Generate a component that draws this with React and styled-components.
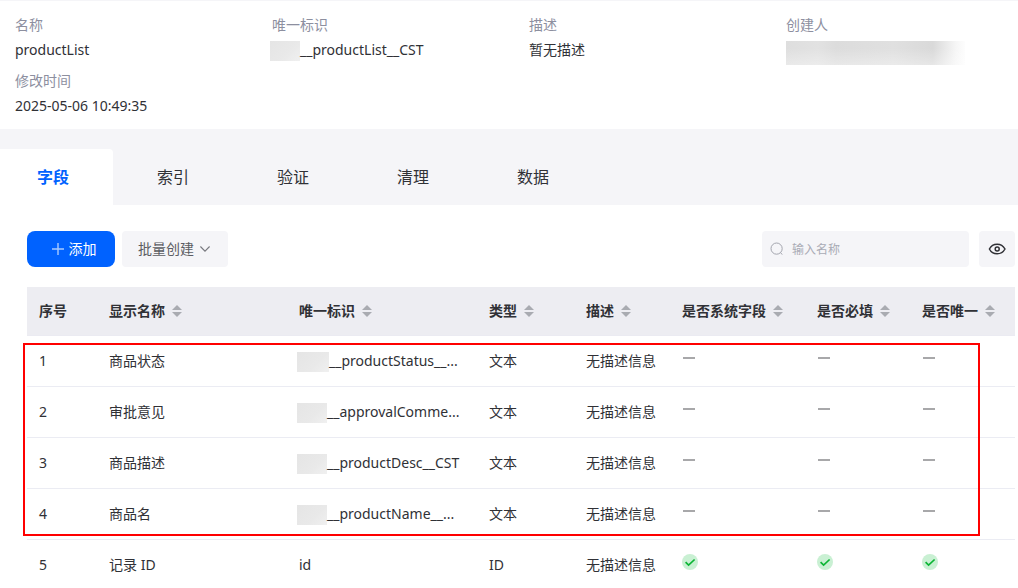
import React, { useState } from 'react';
import styled, { createGlobalStyle } from 'styled-components';

const GlobalStyle = createGlobalStyle`
  * {
    box-sizing: border-box;
  }

  body {
    margin: 0;
    background-color: #fff;
    color: #303136;
    font-family: 'Noto Sans', 'Noto Sans CJK SC', sans-serif;
    font-size: 14px;
    line-height: 20px;
  }

  button,
  input {
    border: 0;
    font: inherit;
    color: inherit;
  }

  button {
    cursor: pointer;
  }
`;

const InfoSection = styled.dl`
  display: grid;
  grid-template-columns: repeat(3, minmax(0, 257fr)) minmax(0, 232fr);
  row-gap: 11px;
  margin: 0;
  padding: 14px 0 13px 15px;
  border-top: 1px solid #f5f5f8;
`;

const InfoLabel = styled.dt`
  margin-bottom: 5px;
  color: #8d8f9f;
`;

const InfoValue = styled.dd`
  display: flex;
  align-items: center;
  height: 20px;
  margin: 0;
`;

const Mask = styled.span`
  flex: none;
  width: ${(props) => props.$width}px;
  height: 20px;
  margin: 2px 0 0 -2px;
  background: linear-gradient(135deg, #e5e5e5, #e9e9e9 60%, #f0f0f0);
`;

const CreatorMask = styled.span`
  width: 179px;
  height: 24px;
  margin-top: 6px;
  background:
    linear-gradient(180deg, rgba(255, 255, 255, 0) 30%, rgba(255, 255, 255, 0.35)),
    linear-gradient(90deg, #dedede, #e2e2e2 18%, #dcdcdc 28%, #e0e0e0 60%, #d9d9d9 82%, #f6f6f6 95%, #fdfdfd);
`;

const TabBar = styled.div`
  display: flex;
  padding-top: 20px;
  background-color: #f5f5f8;
`;

const Tab = styled.button`
  height: 56px;
  padding: 0 44px;
  border-radius: 0 4px 0 0;
  background-color: ${(props) => (props.$active ? '#fff' : 'transparent')};
  color: ${(props) => (props.$active ? '#0062ff' : '#303136')};
  font-size: 16px;
  font-weight: ${(props) => (props.$active ? 700 : 400)};

  &:first-child {
    padding-left: 37px;
  }
`;

const Panel = styled.main`
  padding: 26px 3px 0 27px;
`;

const Toolbar = styled.div`
  display: flex;
  align-items: center;
  margin-bottom: 20px;
`;

const AddButton = styled.button`
  display: flex;
  align-items: center;
  justify-content: center;
  gap: 5px;
  width: 88px;
  height: 36px;
  margin-right: 7px;
  padding: 0 0 0 6px;
  border-radius: 8px;
  background-color: #0062ff;
  color: #fff;
`;

const BatchButton = styled.button`
  display: flex;
  align-items: center;
  gap: 6px;
  height: 36px;
  padding: 0 18px 0 16px;
  border-radius: 4px;
  background-color: #f5f5f8;
  color: #5c5d63;
`;

const SearchBox = styled.label`
  display: flex;
  align-items: center;
  gap: 8px;
  width: 207px;
  height: 36px;
  margin-left: auto;
  padding: 0 8px;
  border-radius: 4px;
  background-color: #f5f5f8;
`;

const SearchInput = styled.input`
  flex: 1;
  min-width: 0;
  padding: 2px 0 0;
  outline: none;
  background: transparent;
  font-size: 12px;

  &::placeholder {
    color: #a9abb5;
    opacity: 1;
  }
`;

const EyeButton = styled.button`
  display: flex;
  align-items: center;
  justify-content: center;
  width: 36px;
  height: 36px;
  margin-left: 10px;
  padding: 0;
  border-radius: 4px;
  background-color: #f5f5f8;
`;

const TableWrapper = styled.div`
  position: relative;
`;

const Highlight = styled.div`
  position: absolute;
  top: 56px;
  right: 35px;
  left: -4px;
  height: 193px;
  border: 2px solid #ff0000;
  pointer-events: none;
`;

const Table = styled.table`
  width: 100%;
  table-layout: fixed;
  border-collapse: separate;
  border-spacing: 0;
`;

const HeadCell = styled.th`
  width: ${(props) => props.$width};
  height: 49px;
  padding: 0 0 0 12px;
  border-bottom: 1px solid #ebebf2;
  background-color: #ededf2;
  font-weight: 700;
  text-align: left;
`;

const HeadContent = styled.div`
  display: flex;
  align-items: center;
  gap: 7px;
  white-space: nowrap;
`;

const SortButton = styled.button`
  display: flex;
  padding: 0;
  background: none;
`;

const Cell = styled.td`
  height: 51px;
  padding: 0 0 0 12px;
  border-bottom: 1px solid #ebecf3;
  white-space: nowrap;
`;

const Identifier = styled.div`
  display: flex;
  align-items: center;
`;

const Flag = styled.div`
  display: flex;
  align-items: center;
  height: 16px;
  margin-bottom: 6px;
`;

const Dash = styled.span`
  width: 12px;
  height: 2px;
  margin-left: 1px;
  background-color: #a8a8aa;
`;

const tabs = ['字段', '索引', '验证', '清理', '数据'];

const columns = [
  { title: '序号', width: '70px' },
  { title: '显示名称', width: '190px', sortable: true },
  { title: '唯一标识', width: '190px', sortable: true },
  { title: '类型', width: '97px', sortable: true },
  { title: '描述', width: '96px', sortable: true },
  { title: '是否系统字段', width: '135px', sortable: true },
  { title: '是否必填', width: '105px', sortable: true },
  { title: '是否唯一', width: 'auto', sortable: true },
];

const rows = [
  { name: '商品状态', id: '__productStatus__...', mask: 32, type: '文本' },
  { name: '审批意见', id: '__approvalComme...', mask: 30, type: '文本' },
  { name: '商品描述', id: '__productDesc__CST', mask: 30, type: '文本' },
  { name: '商品名', id: '__productName__...', mask: 30, type: '文本' },
  { name: '记录 ID', id: 'id', type: 'ID', system: true },
];

const SortIcon = () => (
  <svg width="10" height="12" viewBox="0 0 10 12" fill="#a9abb1">
    <path d="M5 0l5 5H0z" />
    <path d="M5 12l5-5H0z" />
  </svg>
);

const PlusIcon = () => (
  <svg width="12" height="12" viewBox="0 0 12 12" fill="none" stroke="#a8caff">
    <path d="M6 0v12M0 6h12" strokeWidth="1.4" />
  </svg>
);

const ChevronIcon = () => (
  <svg width="10" height="6" viewBox="0 0 10 6" fill="none" stroke="#77787e">
    <path d="M.4.5L5 5.2 9.6.5" strokeWidth="1.1" />
  </svg>
);

const SearchIcon = () => (
  <svg width="14" height="14" viewBox="0 0 14 14" fill="none" stroke="#a3a5ae">
    <circle cx="6.6" cy="6.6" r="5.6" />
    <path d="M10.6 10.6l1.6 2" />
  </svg>
);

const EyeIcon = () => (
  <svg width="18" height="12" viewBox="0 0 18 12" fill="none" stroke="#303136">
    <path d="M1.4 6C3 2.8 5.8 1.2 9.2 1.2S15.2 2.8 17 6C15.2 9.2 12.6 10.8 9.2 10.8S3 9.2 1.4 6z" strokeWidth="1.5" />
    <circle cx="9.2" cy="6" r="2" strokeWidth="1.5" />
  </svg>
);

const CheckIcon = () => (
  <svg width="16" height="16" viewBox="0 0 16 16" fill="none">
    <circle cx="8" cy="8" r="8" fill="#c9f0d3" />
    <path d="M3.6 8.1l3 3 6-5.6" stroke="#0bb534" strokeWidth="1.7" />
  </svg>
);

const FlagValue = ({ checked }) => (
  <Flag>{checked ? <CheckIcon /> : <Dash />}</Flag>
);

const FieldTable = () => (
  <TableWrapper>
    <Table>
      <thead>
        <tr>
          {columns.map((column) => (
            <HeadCell key={column.title} $width={column.width}>
              <HeadContent>
                {column.title}
                {column.sortable && (
                  <SortButton type="button" aria-label={column.title}>
                    <SortIcon />
                  </SortButton>
                )}
              </HeadContent>
            </HeadCell>
          ))}
        </tr>
      </thead>
      <tbody>
        {rows.map((row, index) => (
          <tr key={row.name}>
            <Cell>{index + 1}</Cell>
            <Cell>{row.name}</Cell>
            <Cell>
              <Identifier>
                {row.mask && <Mask $width={row.mask} />}
                {row.id}
              </Identifier>
            </Cell>
            <Cell>{row.type}</Cell>
            <Cell>无描述信息</Cell>
            <Cell><FlagValue checked={row.system} /></Cell>
            <Cell><FlagValue checked={row.system} /></Cell>
            <Cell><FlagValue checked={row.system} /></Cell>
          </tr>
        ))}
      </tbody>
    </Table>
    <Highlight />
  </TableWrapper>
);

const App = () => {
  const [activeTab, setActiveTab] = useState('字段');

  return (
    <>
      <GlobalStyle />
      <InfoSection>
        <div>
          <InfoLabel>名称</InfoLabel>
          <InfoValue>productList</InfoValue>
        </div>
        <div>
          <InfoLabel>唯一标识</InfoLabel>
          <InfoValue>
            <Mask $width={30} />
            __productList__CST
          </InfoValue>
        </div>
        <div>
          <InfoLabel>描述</InfoLabel>
          <InfoValue>暂无描述</InfoValue>
        </div>
        <div>
          <InfoLabel>创建人</InfoLabel>
          <InfoValue><CreatorMask /></InfoValue>
        </div>
        <div>
          <InfoLabel>修改时间</InfoLabel>
          <InfoValue>2025-05-06 10:49:35</InfoValue>
        </div>
      </InfoSection>
      <TabBar role="tablist">
        {tabs.map((tab) => (
          <Tab
            key={tab}
            type="button"
            role="tab"
            aria-selected={tab === activeTab}
            $active={tab === activeTab}
            onClick={() => setActiveTab(tab)}
          >
            {tab}
          </Tab>
        ))}
      </TabBar>
      <Panel>
        <Toolbar>
          <AddButton type="button">
            <PlusIcon />
            添加
          </AddButton>
          <BatchButton type="button">
            批量创建
            <ChevronIcon />
          </BatchButton>
          <SearchBox>
            <SearchIcon />
            <SearchInput type="text" placeholder="输入名称" aria-label="输入名称" />
          </SearchBox>
          <EyeButton type="button" aria-label="显示">
            <EyeIcon />
          </EyeButton>
        </Toolbar>
        <FieldTable />
      </Panel>
    </>
  );
};

export default App;
